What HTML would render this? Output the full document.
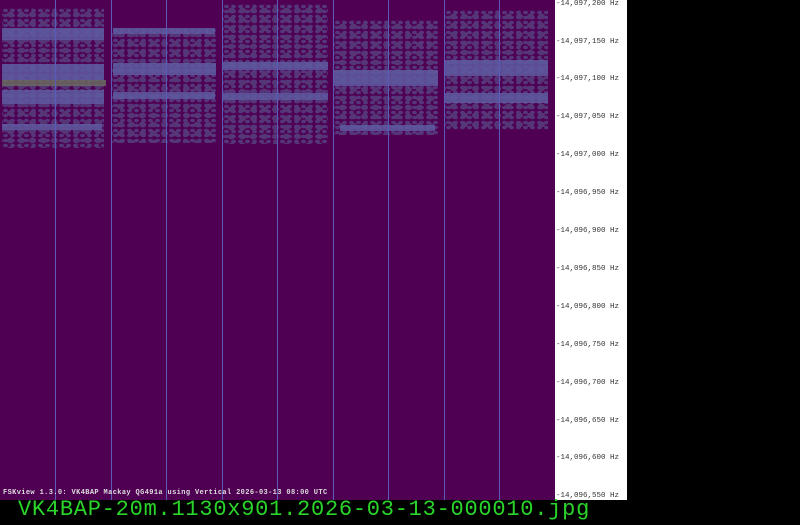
<!DOCTYPE html>
<html><head><style>
body{margin:0;width:800px;height:525px;background:#000;position:relative;overflow:hidden;font-family:"Liberation Mono",monospace}
#w{position:absolute;left:0;top:0;width:555px;height:500px;background:#4f0052}
#s{position:absolute;left:555px;top:0;width:72px;height:500px;background:#fff}
.v{position:absolute;top:0;width:1px;height:500px;background:#5a5ab8}
.b{position:absolute;background:#5e5aa0;opacity:.85}
.n{position:absolute;background-image:radial-gradient(#5a5a9a 45%,transparent 55%),radial-gradient(#5a5a8a 40%,transparent 50%);background-size:7px 5px,11px 9px;background-position:0 0,3px 2px;opacity:.6}
.l{position:absolute;left:556px;font-size:7.5px;color:#333;white-space:pre}
#f{position:absolute;left:18px;top:497px;font-size:22px;color:#2ad52a;letter-spacing:0.75px}
#c{position:absolute;left:3px;top:489px;font-size:7px;color:#ddd;font-weight:bold;letter-spacing:0.37px}
</style></head><body>
<div id="w">
<div class="n" style="left:2px;top:8px;width:102px;height:140px"></div>
<div class="b" style="left:2px;top:28px;width:102px;height:12px"></div>
<div class="b" style="left:2px;top:64px;width:102px;height:16px"></div>
<div class="b" style="left:2px;top:80px;width:104px;height:6px;background:#6a6a60"></div>
<div class="b" style="left:2px;top:90px;width:102px;height:14px"></div>
<div class="b" style="left:2px;top:124px;width:100px;height:6px"></div>
<div class="n" style="left:112px;top:28px;width:104px;height:115px"></div>
<div class="b" style="left:113px;top:28px;width:102px;height:6px"></div>
<div class="b" style="left:113px;top:63px;width:103px;height:12px"></div>
<div class="b" style="left:113px;top:92px;width:102px;height:7px"></div>
<div class="n" style="left:223px;top:4px;width:105px;height:140px"></div>
<div class="b" style="left:223px;top:62px;width:105px;height:8px"></div>
<div class="b" style="left:223px;top:93px;width:105px;height:7px"></div>
<div class="n" style="left:334px;top:20px;width:104px;height:115px"></div>
<div class="b" style="left:334px;top:70px;width:104px;height:16px"></div>
<div class="b" style="left:340px;top:125px;width:95px;height:6px"></div>
<div class="n" style="left:445px;top:10px;width:103px;height:120px"></div>
<div class="b" style="left:445px;top:60px;width:103px;height:16px"></div>
<div class="b" style="left:445px;top:93px;width:103px;height:10px"></div>
<div class="v" style="left:55px"></div><div class="v" style="left:111px"></div><div class="v" style="left:166px"></div><div class="v" style="left:222px"></div><div class="v" style="left:277px"></div><div class="v" style="left:333px"></div><div class="v" style="left:388px"></div><div class="v" style="left:444px"></div><div class="v" style="left:499px"></div>
<div id="c">FSKview 1.3.0: VK4BAP Mackay QG491a using Vertical 2026-03-13 08:00 UTC</div>
</div>
<div id="s"></div>
<div class="l" style="top:0px">-14,097,200 Hz</div>
<div class="l" style="top:38px">-14,097,150 Hz</div>
<div class="l" style="top:75px">-14,097,100 Hz</div>
<div class="l" style="top:113px">-14,097,050 Hz</div>
<div class="l" style="top:151px">-14,097,000 Hz</div>
<div class="l" style="top:189px">-14,096,950 Hz</div>
<div class="l" style="top:227px">-14,096,900 Hz</div>
<div class="l" style="top:265px">-14,096,850 Hz</div>
<div class="l" style="top:303px">-14,096,800 Hz</div>
<div class="l" style="top:341px">-14,096,750 Hz</div>
<div class="l" style="top:379px">-14,096,700 Hz</div>
<div class="l" style="top:417px">-14,096,650 Hz</div>
<div class="l" style="top:454px">-14,096,600 Hz</div>
<div class="l" style="top:492px">-14,096,550 Hz</div>
<div id="f">VK4BAP-20m.1130x901.2026-03-13-000010.jpg</div>
</body></html>
